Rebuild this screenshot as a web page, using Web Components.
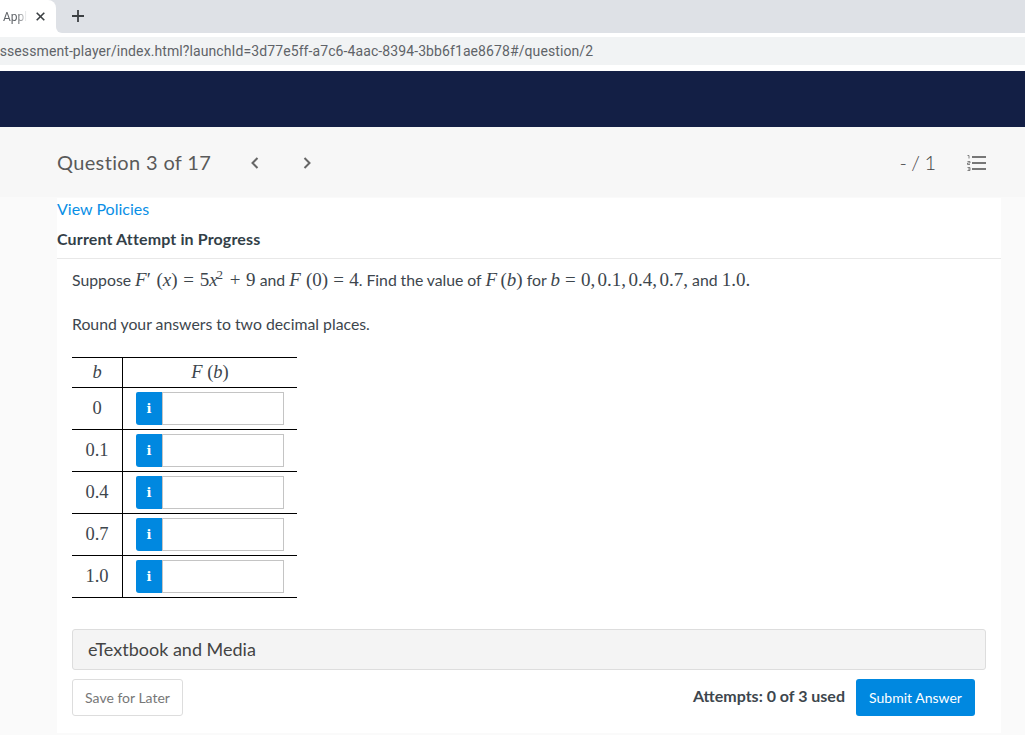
<!DOCTYPE html>
<html>
<head>
<meta charset="utf-8">
<title>Assessment player</title>
<style>
  html, body { margin: 0; padding: 0; height: 735px; overflow: hidden; background: #fafafa; font-family: Lato, sans-serif; }
</style>
</head>
<body>
<browser-bar url="assessment-player/index.html?launchId=3d77e5ff-a7c6-4aac-8394-3bb6f1ae8678#/question/2"></browser-bar>
<site-banner></site-banner>
<question-head></question-head>
<question-card>
  <problem-text></problem-text>
  <answer-table></answer-table>
  <media-panel>eTextbook and Media</media-panel>
  <action-bar></action-bar>
</question-card>

<script>
// browser tab strip and address bar
class BrowserBar extends HTMLElement {
  constructor() {
    super();
    this.attachShadow({ mode: 'open' });
    this.shadowRoot.innerHTML = `
    <style>
      :host { display: block; background: #fff; font-family: Roboto, sans-serif; }
      .strip { height: 33px; display: flex; background: linear-gradient(#dee1e6 70%, #fff 70%); }
      .tab { width: 56px; height: 33px; background: #fff; border-radius: 0 8px 0 0; display: flex; align-items: center; box-sizing: border-box; padding-left: 3px; }
      .tab span { font-size: 12px; color: #5f6368; width: 24px; overflow: hidden; white-space: nowrap; -webkit-mask-image: linear-gradient(to right, #000 60%, transparent 100%); mask-image: linear-gradient(to right, #000 60%, transparent 100%); }
      .tab svg { margin-left: 9px; margin-top: -1px; }
      .rest { flex: 1; height: 33px; background: #dee1e6; border-radius: 0 0 0 6px; display: flex; align-items: center; padding-left: 16px; }
      .rest svg { margin-top: -1px; }
      .addr { margin-top: 4px; height: 28px; background: #f1f3f4; overflow: hidden; display: flex; align-items: center; font-size: 14px; color: #5f6368; white-space: nowrap; }
      .addr span { margin-left: -8px; letter-spacing: 0.095px; }
      .gap { height: 6px; }
    </style>
    <div class="strip">
      <div class="tab"><span>Apple</span>
        <svg width="9" height="9" viewBox="0 0 9 9"><path d="M0.7 0.7 L8.3 8.3 M8.3 0.7 L0.7 8.3" stroke="#3c4043" stroke-width="1.6" fill="none"/></svg>
      </div>
      <div class="rest">
        <svg width="12" height="12" viewBox="0 0 12 12"><path d="M6 0 V12 M0 6 H12" stroke="#3c4043" stroke-width="1.8" fill="none"/></svg>
      </div>
    </div>
    <div class="addr"><span></span></div>
    <div class="gap"></div>`;
    this.shadowRoot.querySelector('.addr span').textContent = this.getAttribute('url');
  }
}

class SiteBanner extends HTMLElement {
  constructor() {
    super();
    this.attachShadow({ mode: 'open' });
    this.shadowRoot.innerHTML = `<style>:host { display: block; height: 56px; background: #131f45; }</style>`;
  }
}

// grey band with question counter, arrows, score and list icon
class QuestionHead extends HTMLElement {
  constructor() {
    super();
    this.attachShadow({ mode: 'open' });
    this.shadowRoot.innerHTML = `
    <style>
      :host { display: flex; align-items: center; height: 70px; background: #f7f7f7; padding: 0 39px 0 57px; color: #5a5a5a; box-sizing: border-box; }
      .title { font-size: 20px; letter-spacing: 0.35px; width: 193px; }
      .arrows { display: flex; gap: 42px; align-items: center; margin-top: 2px; }
      .score { margin-left: auto; font-size: 20px; margin-right: 31px; font-weight: 300; word-spacing: -1px; color: #444; }
      svg { display: block; }
    </style>
    <div class="title">Question 3 of 17</div>
    <div class="arrows">
      <svg width="10" height="12" viewBox="0 0 10 12"><path d="M7.5 1 L2.5 6 L7.5 11" stroke="#666" stroke-width="2" fill="none"/></svg>
      <svg width="10" height="12" viewBox="0 0 10 12"><path d="M2.5 1 L7.5 6 L2.5 11" stroke="#666" stroke-width="2" fill="none"/></svg>
    </div>
    <div class="score">- / 1</div>
    <svg width="19" height="16" viewBox="0 0 19 16" style="margin-top:2px">
      <path d="M5 2 H19 M5 8 H19 M5 14 H19" stroke="#777" stroke-width="2" fill="none"/>
      <path d="M0.5 0.5 H2 V3.5 M0.5 6.5 H3 V8 H0.5 V9.5 H3 M0.5 12.5 H3 V15.5 H0.5 M1 14 H3" stroke="#666" stroke-width="0.8" fill="none"/>
    </svg>`;
  }
}

// white card holding the links and everything below them
class QuestionCard extends HTMLElement {
  constructor() {
    super();
    this.attachShadow({ mode: 'open' });
    this.shadowRoot.innerHTML = `
    <style>
      :host { display: block; background: #fff; margin: 1px 24px 0 57px; height: 535px; box-sizing: border-box; color: #333f48; }
      a { display: block; color: #0a8fe6; font-size: 16px; line-height: 18px; padding-top: 2px; text-decoration: none; }
      h2 { margin: 12px 0 0; font-size: 16px; line-height: 18px; font-weight: 700; letter-spacing: 0.14px; color: #333f48; padding-bottom: 10px; border-bottom: 1px solid #e8e8e8; }
      .body { padding: 0 15px; }
    </style>
    <a href="#">View Policies</a>
    <h2>Current Attempt in Progress</h2>
    <div class="body"><slot></slot></div>`;
  }
}

class ProblemText extends HTMLElement {
  constructor() {
    super();
    this.attachShadow({ mode: 'open' });
    this.shadowRoot.innerHTML = `
    <style>
      :host { display: block; font-size: 15.8px; color: #3d464d; padding-top: 10px; }
      p { margin: 0; line-height: 22px; white-space: nowrap; }
      p + p { margin-top: 22px; }
      .m { font-family: "Liberation Serif", serif; font-size: 19px; word-spacing: 0.4px; }
      .w { word-spacing: 0.9px; }
      .n { word-spacing: -1.4px; }
      .t { word-spacing: -0.3px; }
      .l { word-spacing: -2.3px; }
      i { font-family: "Liberation Serif", serif; }
      sup { font-size: 13px; line-height: 0; vertical-align: 7px; margin-left: -1px; margin-right: 1px; }
    </style>
    <p>Suppose <span class="m w"><i>F</i>′ (<i>x</i>) = 5<i>x</i><sup>2</sup> + 9</span> and <span class="m"><i>F</i> (0) = 4</span>. <span class="t">Find the value of</span> <span class="m n"><i>F</i> (<i>b</i>)</span> for <span class="m"><i>b</i> = <span class="l">0, 0.1, 0.4, 0.7,</span></span> and <span class="m">1.0.</span></p>
    <p>Round your answers to two decimal places.</p>`;
  }
}

// table of b values, one row per input
class AnswerTable extends HTMLElement {
  constructor() {
    super();
    this.attachShadow({ mode: 'open' });
    const values = ['0', '0.1', '0.4', '0.7', '1.0'];
    const rows = values.map(v => `
      <div class="cell left">${v}</div>
      <div class="cell right"><span class="info">i</span><span class="field"></span></div>`).join('');
    this.shadowRoot.innerHTML = `
    <style>
      :host { display: grid; grid-template-columns: 51px 174px; width: 225px; margin-top: 22px; border-top: 1px solid #000; font-family: "Liberation Serif", serif; font-size: 18.5px; color: #3d464d; }
      .cell { border-bottom: 1px solid #000; height: 41px; display: flex; align-items: center; }
      .head { height: 29px; justify-content: center; }
      .left { border-right: 1px solid #000; justify-content: center; }
      .right { padding-left: 13px; }
      .info { width: 26px; height: 33px; background: #0088e0; color: #fff; border-radius: 2px 0 0 3px; font: 700 13px "DejaVu Serif", serif; display: flex; align-items: center; justify-content: center; }
      .field { width: 122px; height: 33px; box-sizing: border-box; border: 1px solid #c4c4c4; background: #fff; }
    </style>
    <div class="cell head left"><i>b</i></div>
    <div class="cell head"><span><i>F</i> (<i>b</i>)</span></div>
    ${rows}`;
  }
}

class MediaPanel extends HTMLElement {
  constructor() {
    super();
    this.attachShadow({ mode: 'open' });
    this.shadowRoot.innerHTML = `
    <style>
      :host { display: flex; align-items: center; height: 41px; box-sizing: border-box; margin-top: 31px; padding: 0 0 2px 15px; background: #f4f4f4; border: 1px solid #ddd; border-radius: 3px; font-size: 18px; color: #444; }
    </style>
    <slot></slot>`;
  }
}

class ActionBar extends HTMLElement {
  constructor() {
    super();
    this.attachShadow({ mode: 'open' });
    this.shadowRoot.innerHTML = `
    <style>
      :host { display: flex; align-items: center; margin-top: 9px; padding-right: 11px; font-size: 14px; }
      button { font: 14px Lato, sans-serif; height: 37px; border-radius: 3px; cursor: pointer; padding: 0; }
      .save { width: 111px; background: #fff; border: 1px solid #ddd; color: #777; }
      .count { margin-left: auto; margin-right: 11px; font-size: 16px; font-weight: 700; color: #3d464d; position: relative; top: -2px; }
      .submit { width: 119px; background: #0088e0; border: 0; color: #fff; }
    </style>
    <button class="save">Save for Later</button>
    <span class="count">Attempts: 0 of 3 used</span>
    <button class="submit">Submit Answer</button>`;
  }
}

customElements.define('browser-bar', BrowserBar);
customElements.define('site-banner', SiteBanner);
customElements.define('question-head', QuestionHead);
customElements.define('question-card', QuestionCard);
customElements.define('problem-text', ProblemText);
customElements.define('answer-table', AnswerTable);
customElements.define('media-panel', MediaPanel);
customElements.define('action-bar', ActionBar);
</script>
</body>
</html>
